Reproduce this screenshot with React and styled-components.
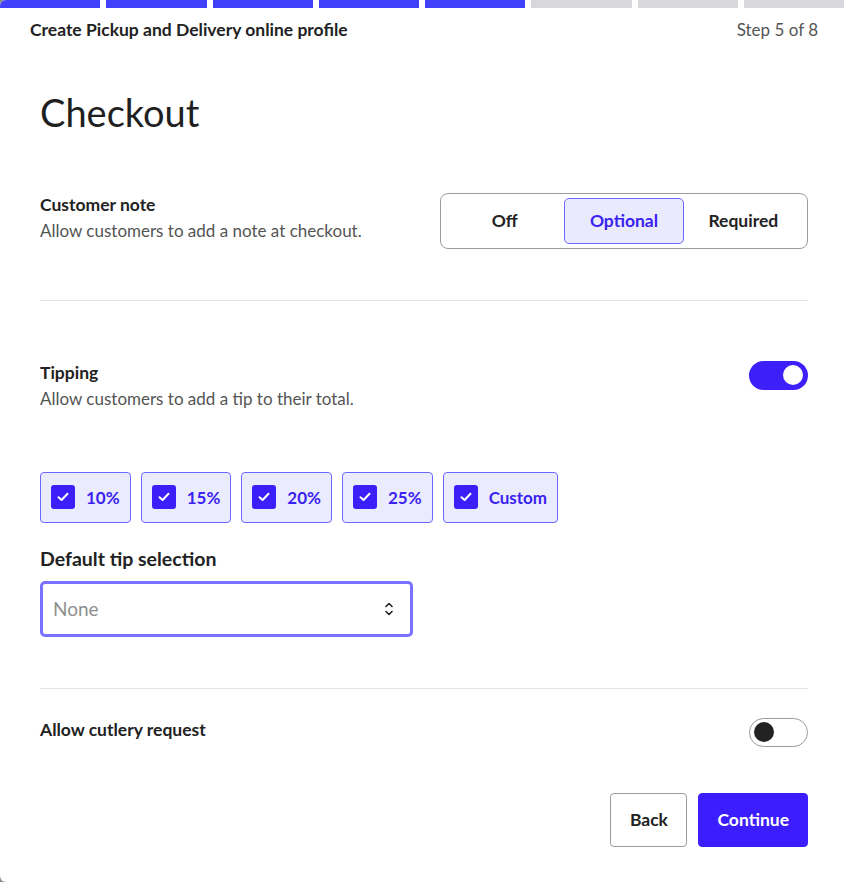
import { useState } from 'react'
import styled, { createGlobalStyle } from 'styled-components'

const GlobalStyle = createGlobalStyle`
  html, body {
    margin: 0;
    padding: 0;
    background: #8c8c8c;
  }
  body {
    font-family: Lato, "Noto Sans", sans-serif;
    color: #222;
  }
`

const Modal = styled.div`
  width: 844px;
  height: 882px;
  background: #fff;
  border-radius: 6px 0 0 6px;
  overflow: hidden;
`

const Progress = styled.div`
  display: grid;
  grid-template-columns: repeat(8, 1fr);
  gap: 6px;
  height: 8px;
`

const Segment = styled.div`
  background: ${(p) => (p.$done ? '#4141fb' : '#d8d8dc')};
`

const Header = styled.div`
  display: flex;
  justify-content: space-between;
  align-items: center;
  padding: 12px 26px 0 30px;
  line-height: 20px;
`

const HeaderTitle = styled.div`
  font-size: 17.5px;
  font-weight: 700;
  color: #222;
`

const StepText = styled.div`
  font-size: 17px;
  color: #555;
`

const Content = styled.div`
  padding: 0 36px 0 40px;
`

const PageTitle = styled.h1`
  margin: 50px 0 0;
  font-size: 38px;
  font-weight: 400;
  line-height: 1.2;
  color: #1f1f1f;
`

const Row = styled.div`
  display: flex;
  justify-content: space-between;
  align-items: flex-start;
  margin-top: ${(p) => p.$top || 0}px;
`

const Label = styled.div`
  font-size: 17.5px;
  font-weight: 700;
  line-height: 24px;
  color: #222;
`

const Hint = styled.div`
  margin-top: 2px;
  font-size: 17px;
  line-height: 24px;
  color: #555;
`

const SegmentedControl = styled.div`
  display: grid;
  grid-template-columns: 1fr 1fr 1fr;
  width: 368px;
  box-sizing: border-box;
  padding: 4px;
  border: 1px solid #9c9c9c;
  border-radius: 8px;
`

const SegmentButton = styled.button`
  height: 46px;
  border: 1px solid ${(p) => (p.$active ? '#6c68ff' : 'transparent')};
  border-radius: 5px;
  background: ${(p) => (p.$active ? '#e9ebfd' : 'transparent')};
  color: ${(p) => (p.$active ? '#3a22f0' : '#222')};
  font-family: inherit;
  font-size: 17.5px;
  font-weight: 700;
  cursor: pointer;
`

const Divider = styled.hr`
  margin: ${(p) => p.$top}px 0 0;
  border: 0;
  border-top: 1px solid #e2e2e4;
`

const Toggle = styled.button`
  position: relative;
  width: 59px;
  height: 29px;
  padding: 0;
  border-radius: 15px;
  box-sizing: border-box;
  border: ${(p) => (p.$on ? 'none' : '1.5px solid #9a9a9a')};
  background: ${(p) => (p.$on ? '#3d1ffa' : '#fff')};
  cursor: pointer;

  &::after {
    content: '';
    position: absolute;
    top: 50%;
    width: 20px;
    height: 20px;
    margin-top: -10px;
    border-radius: 50%;
    background: ${(p) => (p.$on ? '#fff' : '#222')};
    ${(p) => (p.$on ? 'right: 5px;' : 'left: 4px;')}
  }
`

const Chips = styled.div`
  display: flex;
  gap: 10px;
  margin-top: 61px;
`

const Chip = styled.label`
  display: flex;
  align-items: center;
  gap: 11px;
  height: 51px;
  box-sizing: border-box;
  padding: 0 10px;
  border: 1px solid #6c68ff;
  border-radius: 4px;
  background: #eaecfd;
  color: #3a22f0;
  font-size: 17px;
  font-weight: 700;
  cursor: pointer;
`

const Box = styled.span`
  display: flex;
  align-items: center;
  justify-content: center;
  width: 24px;
  height: 24px;
  border-radius: 3px;
  background: ${(p) => (p.$checked ? '#3a1ff9' : '#fff')};
`

const FieldLabel = styled.div`
  margin-top: 24px;
  font-size: 19.5px;
  font-weight: 700;
  line-height: 24px;
  color: #222;
`

const Select = styled.div`
  display: flex;
  align-items: center;
  justify-content: space-between;
  margin-top: 10px;
  width: 373px;
  height: 56px;
  box-sizing: border-box;
  padding: 0 16px 0 10px;
  border: 3px solid #7a72ff;
  border-radius: 5px;
  font-size: 19px;
  color: #8f8f8f;
`

const Actions = styled.div`
  display: flex;
  justify-content: flex-end;
  gap: 11px;
  margin-top: 46px;
`

const Button = styled.button`
  height: 54px;
  padding: 0 ${(p) => (p.$primary ? 18 : 18.5)}px;
  border-radius: 4px;
  border: 1px solid ${(p) => (p.$primary ? '#3c1dfd' : '#9a9a9a')};
  background: ${(p) => (p.$primary ? '#3c1dfd' : '#fff')};
  color: ${(p) => (p.$primary ? '#fff' : '#222')};
  font-family: inherit;
  font-size: 17.5px;
  font-weight: 700;
  cursor: pointer;
`

const CheckIcon = () => (
  <svg width="12" height="10" viewBox="0 0 12 10" fill="none">
    <path d="M1.5 5.2 L4.6 8 L10.5 1.8" stroke="#fff" strokeWidth="2" strokeLinecap="round" strokeLinejoin="round" />
  </svg>
)

const UpDownIcon = () => (
  <svg width="10" height="16" viewBox="0 0 10 16" fill="none">
    <path d="M2 5.5 L5 2.5 L8 5.5" stroke="#222" strokeWidth="1.6" strokeLinecap="round" strokeLinejoin="round" />
    <path d="M2 10.5 L5 13.5 L8 10.5" stroke="#222" strokeWidth="1.6" strokeLinecap="round" strokeLinejoin="round" />
  </svg>
)

const noteOptions = ['Off', 'Optional', 'Required']
const tipOptions = ['10%', '15%', '20%', '25%', 'Custom']

export default function App() {
  const [note, setNote] = useState('Optional')
  const [tipping, setTipping] = useState(true)
  const [cutlery, setCutlery] = useState(false)
  const [tips, setTips] = useState(tipOptions)

  const toggleTip = (tip) => {
    setTips((prev) => (prev.includes(tip) ? prev.filter((t) => t !== tip) : [...prev, tip]))
  }

  return (
    <>
      <GlobalStyle />
      <Modal>
        <Progress>
          {Array.from({ length: 8 }).map((_, i) => (
            <Segment key={i} $done={i < 5} />
          ))}
        </Progress>
        <Header>
          <HeaderTitle>Create Pickup and Delivery online profile</HeaderTitle>
          <StepText>Step 5 of 8</StepText>
        </Header>

        <Content>
          <PageTitle>Checkout</PageTitle>

          <Row $top={57}>
            <div>
              <Label>Customer note</Label>
              <Hint>Allow customers to add a note at checkout.</Hint>
            </div>
            <SegmentedControl>
              {noteOptions.map((opt) => (
                <SegmentButton key={opt} $active={note === opt} onClick={() => setNote(opt)}>
                  {opt}
                </SegmentButton>
              ))}
            </SegmentedControl>
          </Row>

          <Divider $top={51} />

          <Row $top={60}>
            <div>
              <Label>Tipping</Label>
              <Hint>Allow customers to add a tip to their total.</Hint>
            </div>
            <Toggle $on={tipping} onClick={() => setTipping(!tipping)} aria-label="Tipping" />
          </Row>

          <Chips>
            {tipOptions.map((tip) => (
              <Chip key={tip} onClick={() => toggleTip(tip)}>
                <Box $checked={tips.includes(tip)}>{tips.includes(tip) && <CheckIcon />}</Box>
                {tip}
              </Chip>
            ))}
          </Chips>

          <FieldLabel>Default tip selection</FieldLabel>
          <Select>
            <span>None</span>
            <UpDownIcon />
          </Select>

          <Divider $top={51} />

          <Row $top={29}>
            <Label>Allow cutlery request</Label>
            <Toggle $on={cutlery} onClick={() => setCutlery(!cutlery)} aria-label="Allow cutlery request" />
          </Row>

          <Actions>
            <Button>Back</Button>
            <Button $primary>Continue</Button>
          </Actions>
        </Content>
      </Modal>
    </>
  )
}
